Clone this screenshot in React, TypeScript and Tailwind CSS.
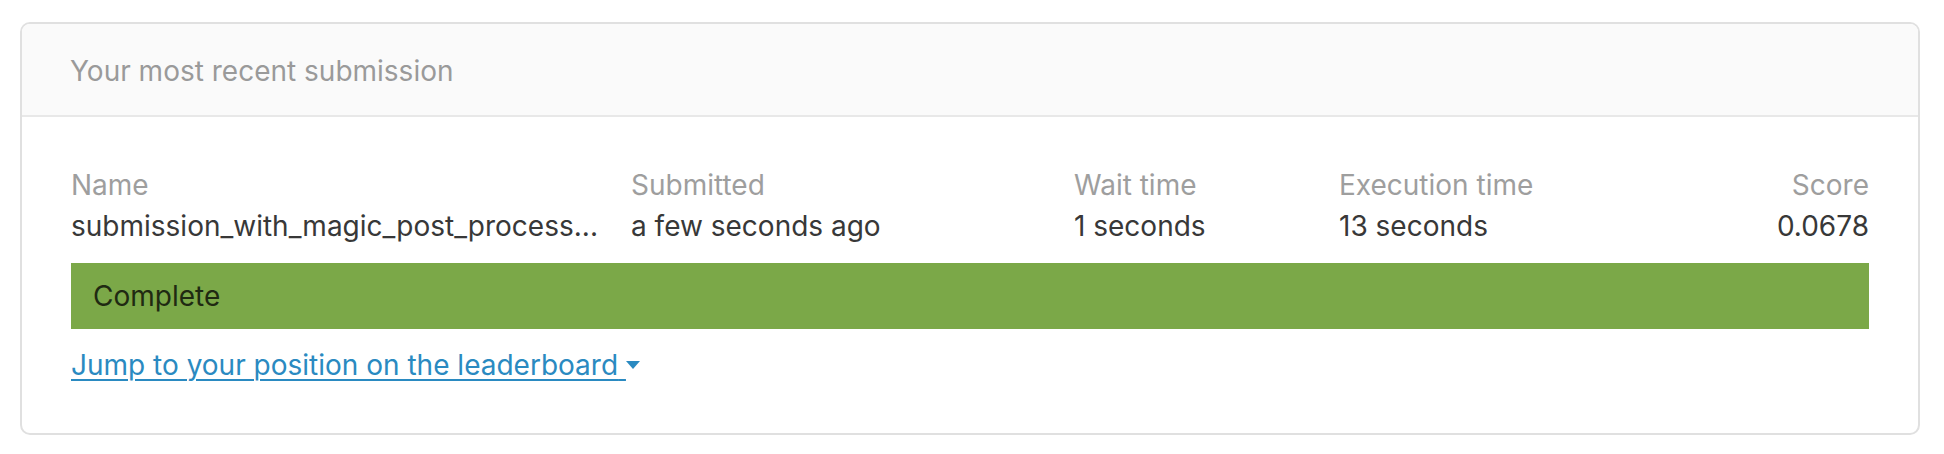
export default function App() {
  return (
    <div className="min-h-screen bg-white pt-[22px] px-[20px] font-['Inter',sans-serif]">
      <div className="w-[1900px] rounded-[10px] border-2 border-[#e0e0e0] overflow-hidden">
        <div className="h-[93px] bg-[#fafafa] border-b-2 border-[#e8e8e8] px-[48px] flex items-center">
          <h2 className="text-[28px] text-[#9a9a9a] leading-none pt-[2px]">Your most recent submission</h2>
        </div>
        <div className="px-[49px] pt-[48px] pb-[43px]">
          <div className="grid grid-cols-[560px_443px_265px_1fr_auto] text-[28px] leading-[41px]">
            <div className="text-[#9e9e9e]">Name</div>
            <div className="text-[#9e9e9e]">Submitted</div>
            <div className="text-[#9e9e9e]">Wait time</div>
            <div className="text-[#9e9e9e]">Execution time</div>
            <div className="text-[#9e9e9e] text-right">Score</div>
            <div className="text-[#383838] whitespace-nowrap">submission_with_magic_post_process...</div>
            <div className="text-[#383838]">a few seconds ago</div>
            <div className="text-[#383838]">1 seconds</div>
            <div className="text-[#383838]">13 seconds</div>
            <div className="text-[#383838] text-right">0.0678</div>
          </div>
          <div className="mt-[16px] h-[66px] bg-[#7ba848] flex items-center px-[22px]">
            <span className="text-[28px] text-[#1f2a12]">Complete</span>
          </div>
          <div className="mt-[16px] leading-[41px]">
            <a href="#" className="text-[28px] text-[#2a8ac1] underline underline-offset-[4px] decoration-[2px]">
              Jump to your position on the leaderboard{" "}
              <svg className="inline-block align-middle -mt-[4px]" width="14" height="9" viewBox="0 0 14 9">
                <path d="M0 0 L14 0 L7 8 Z" fill="#2a8ac1" />
              </svg>
            </a>
          </div>
        </div>
      </div>
    </div>
  );
}
